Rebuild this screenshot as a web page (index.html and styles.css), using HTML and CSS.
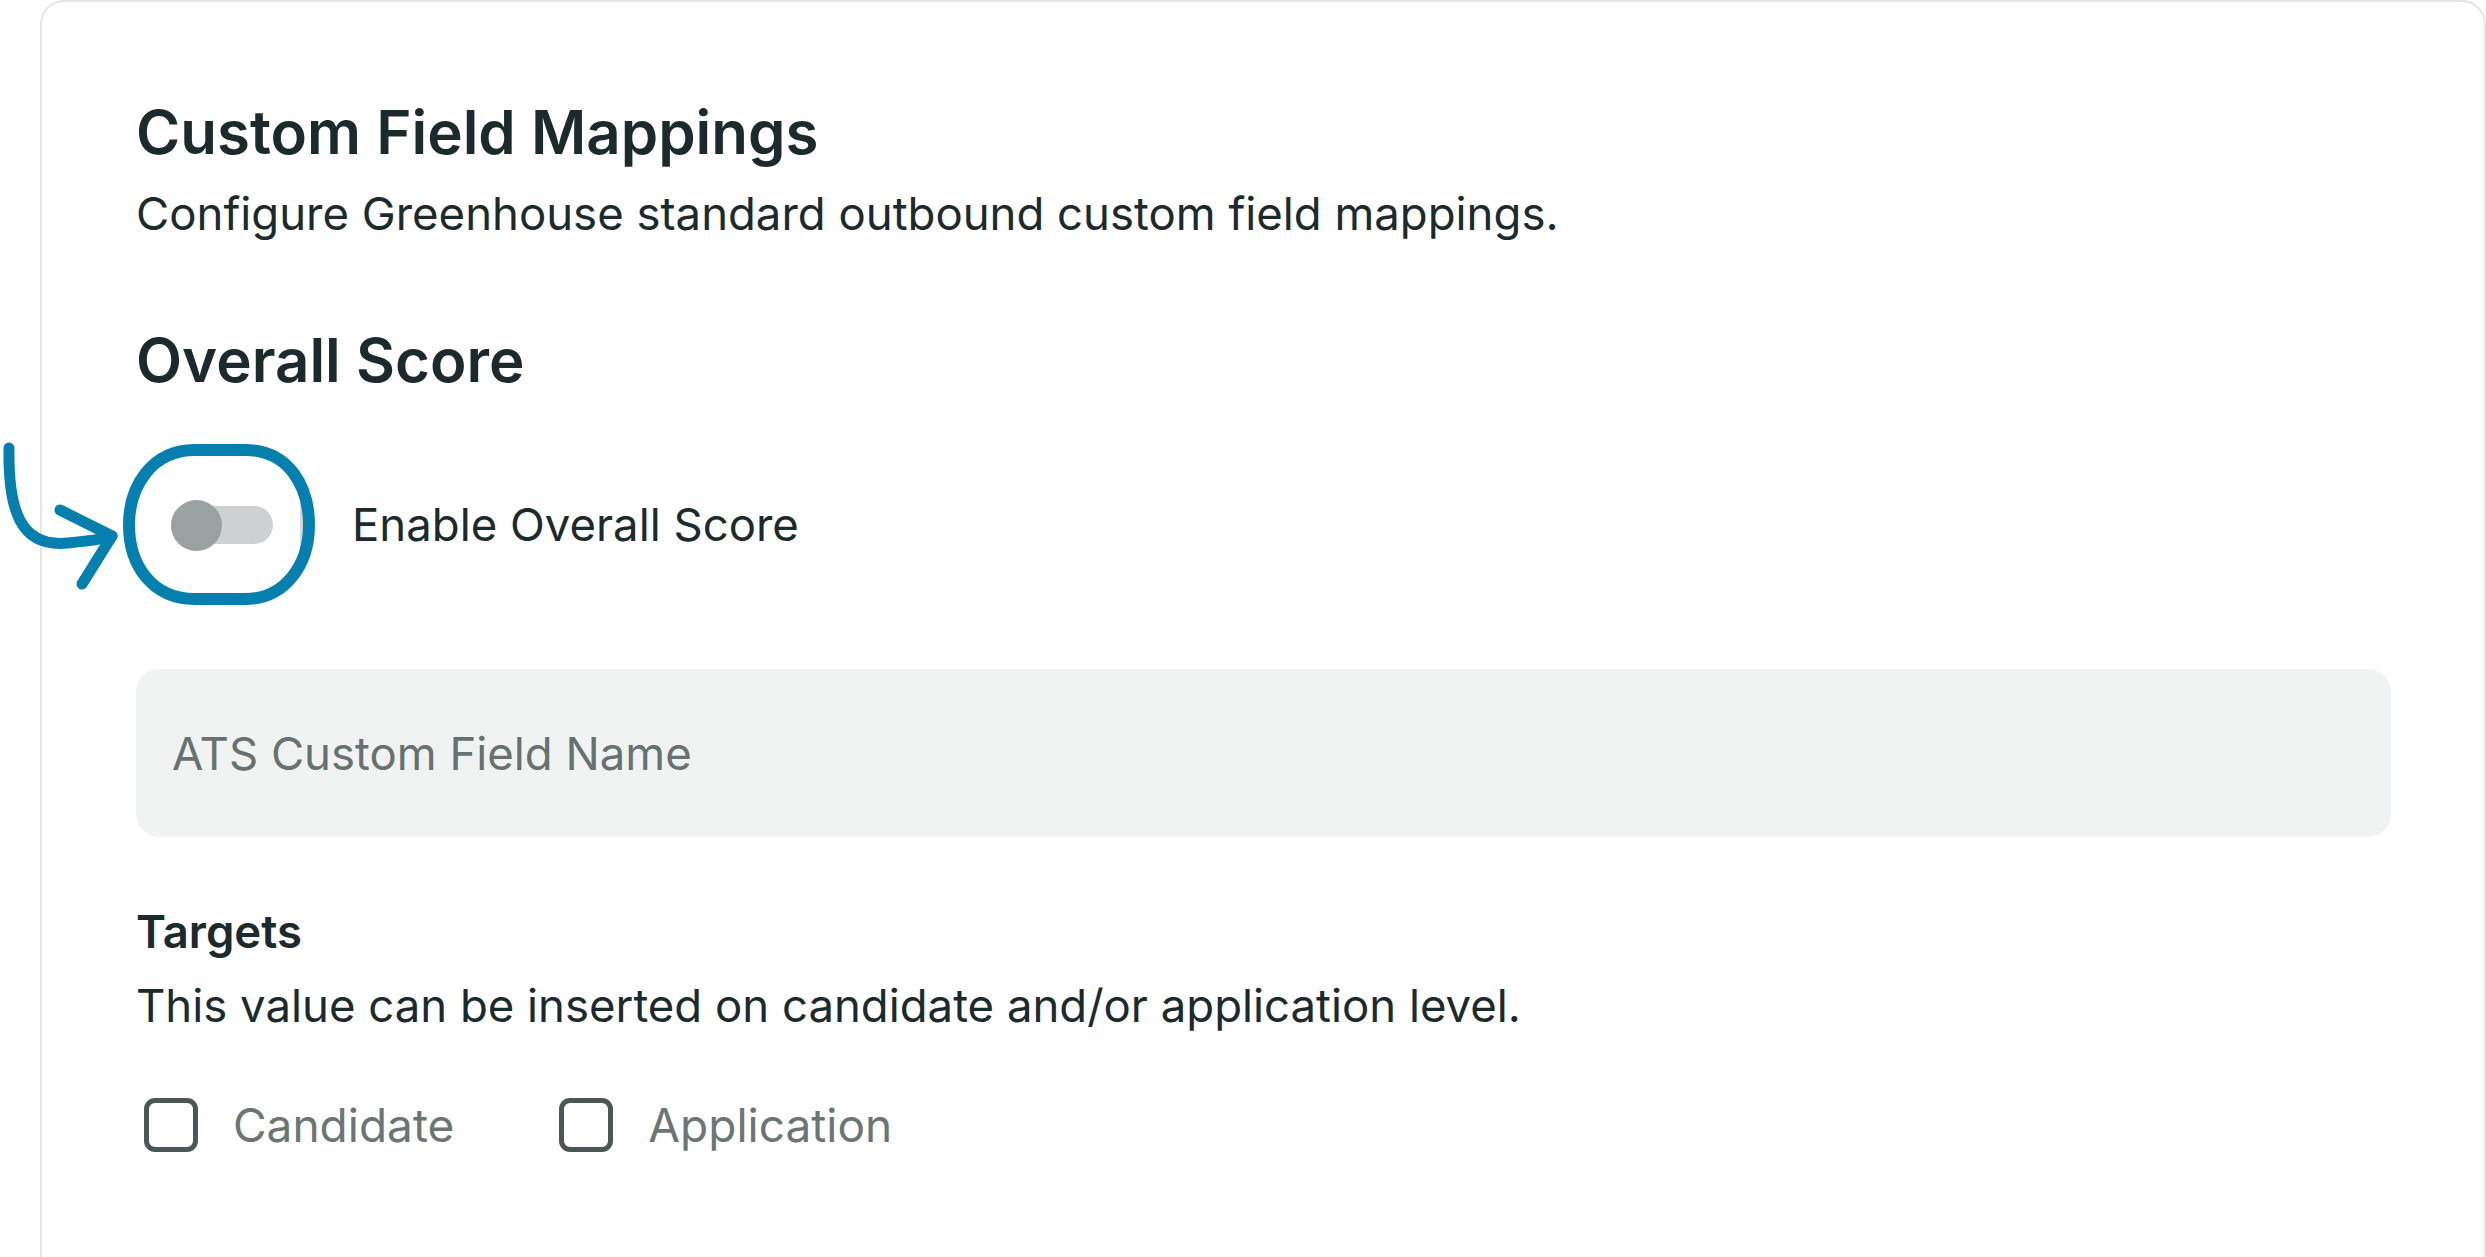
FILE: index.html
```html
<!DOCTYPE html>
<html lang="en">
<head>
<meta charset="utf-8">
<title>Custom Field Mappings</title>
<link rel="stylesheet" href="styles.css">
</head>
<body>
  <section class="card">
    <h1 class="title">Custom Field Mappings</h1>
    <p class="subtitle">Configure Greenhouse standard outbound custom field mappings.</p>

    <h2 class="section-title">Overall Score</h2>

    <div class="toggle-row">
      <div class="switch"><span class="knob"></span></div>
      <span class="toggle-label">Enable Overall Score</span>
    </div>

    <input class="field" type="text" placeholder="ATS Custom Field Name">

    <h3 class="targets-title">Targets</h3>
    <p class="targets-desc">This value can be inserted on candidate and/or application level.</p>

    <div class="checks">
      <label class="check"><span class="box"></span><span class="check-text">Candidate</span></label>
      <label class="check"><span class="box"></span><span class="check-text">Application</span></label>
    </div>
  </section>

  <svg class="annotation" width="330" height="190" viewBox="0 0 330 190" aria-hidden="true">
    <rect x="300" y="47" width="3" height="96" fill="#d6d9d9"/>
    <path d="M195 20 L245 20 C290 20 309 58 309 95 C309 135 285 169 245 169 L195 169 C152 169 129 135 129 95 C129 56 152 20 195 20 Z" fill="none" stroke="#047fae" stroke-width="12"/>
    <path d="M9 18 C8 80 20 118 68 113 S100 108 112 106" fill="none" stroke="#047fae" stroke-width="11" stroke-linecap="round"/>
    <path d="M60 80 L112 106 L82 154" fill="none" stroke="#047fae" stroke-width="11" stroke-linecap="round" stroke-linejoin="round"/>
  </svg>
</body>
</html>
```

FILE: styles.css
```css
html, body {
  margin: 0;
  padding: 0;
  background: #ffffff;
}

body {
  font-family: Inter, "Noto Sans", "Liberation Sans", sans-serif;
  color: #1b2a2c;
  position: relative;
  overflow: hidden;
  height: 1257px;
}

.card {
  margin-left: 40px;
  min-height: 1400px;
  box-sizing: border-box;
  border: 2px solid #e3e6e5;
  border-bottom: none;
  border-radius: 24px 24px 0 0;
  padding: 94px 93px 0 94px;
  background: #ffffff;
}

.title {
  margin: 0;
  font-size: 60px;
  line-height: 72px;
  font-weight: 600;
  color: #1b2a2c;
}

.subtitle {
  margin: 16px 0 0;
  font-size: 45.5px;
  line-height: 60px;
  font-weight: 400;
}

.section-title {
  margin: 80px 0 0;
  font-size: 60px;
  line-height: 72px;
  font-weight: 600;
}

.toggle-row {
  margin-top: 79px;
  height: 100px;
  display: flex;
  align-items: center;
}

.switch {
  position: relative;
  margin-left: 35px;
  width: 102px;
  height: 38px;
  border-radius: 19px;
  background: #cdd1d1;
  flex: none;
}

.knob {
  position: absolute;
  left: 0;
  top: -6.5px;
  width: 51px;
  height: 51px;
  border-radius: 50%;
  background: #9aa1a1;
}

.toggle-label {
  margin-left: 79px;
  font-size: 45.5px;
  line-height: 60px;
}

.field {
  display: block;
  margin-top: 94px;
  width: 100%;
  height: 168px;
  box-sizing: border-box;
  border: none;
  outline: none;
  border-radius: 23px;
  background: #f1f3f2;
  padding: 0 36px;
  font-family: inherit;
  font-size: 45.5px;
  color: #1b2a2c;
}

.field::placeholder {
  color: #67716f;
  opacity: 1;
}

.targets-title {
  margin: 65px 0 0;
  font-size: 45.5px;
  line-height: 60px;
  font-weight: 600;
}

.targets-desc {
  margin: 14px 0 0;
  font-size: 45.5px;
  line-height: 60px;
}

.checks {
  margin-top: 59px;
  display: flex;
  align-items: center;
  gap: 105px;
  height: 60px;
}

.check {
  display: flex;
  align-items: center;
  gap: 35px;
}

.box {
  margin-left: 8px;
  width: 54px;
  height: 54px;
  box-sizing: border-box;
  border: 5px solid #4b5757;
  border-radius: 11px;
  flex: none;
}

.check + .check .box {
  margin-left: 0;
}

.check-text {
  font-size: 46px;
  line-height: 60px;
  color: #6b7574;
}

.annotation {
  position: absolute;
  left: 0;
  top: 430px;
  pointer-events: none;
}
```
